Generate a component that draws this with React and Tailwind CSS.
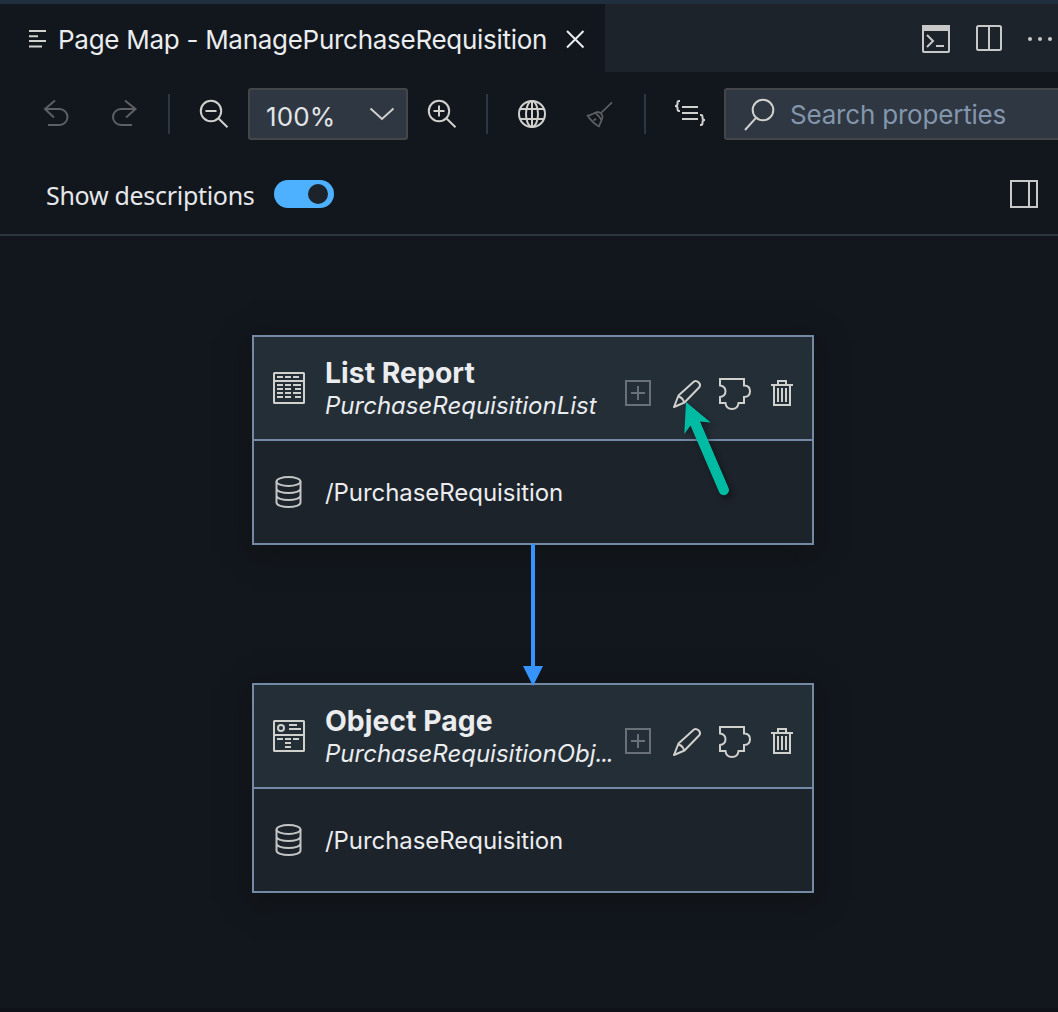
import React from "react";

function Icon({ box, className = "", children, sw = 2 }) {
  const [, , w, h] = box.split(" ");
  return (
    <svg
      width={w}
      height={h}
      viewBox={box}
      className={`shrink-0 ${className}`}
      fill="none"
      stroke="currentColor"
      strokeWidth={sw}
    >
      {children}
    </svg>
  );
}

function Separator({ className }) {
  return <div className={`h-10 w-0.5 shrink-0 bg-[#2d3744] ${className}`} />;
}

function TabBar() {
  return (
    <div className="flex h-[72px] border-t-4 border-[#1f2f40] bg-[#1d232a]">
      <div className="flex h-full w-[605px] shrink-0 items-center bg-[#12171e] pt-0.5 text-[#eaecee]">
        <Icon box="28 28 20 22" className="ml-7 text-[#d0d0cd]">
          <path d="M29 31h17M29 36.200h9M29 41h17M29 46.400h13" />
        </Icon>
        <span className="ml-2.5 w-[489px] whitespace-nowrap pt-0.5 text-[26px] leading-8 tracking-[-0.28px]">
          Page Map - ManagePurchaseRequisition
        </span>
        <Icon box="565 29 20 20" className="ml-[18px]">
          <path d="M567 31l16.500 16.500M583.500 31L567 47.500" />
        </Icon>
      </div>
      <div className="flex flex-1 items-center justify-end pt-0.5 text-[#c8c8c8]">
        <Icon box="921 22 30 34">
          <rect x="923" y="26" width="26" height="26" rx="1" />
          <path d="M922 28h28" strokeWidth="6" />
          <path d="M927 35l6 6-6 6M936 46h8" />
        </Icon>
        <Icon box="975 22 28 34" className="ml-6">
          <rect x="977" y="26" width="24" height="24" rx="1.500" />
          <path d="M989 26v24" />
        </Icon>
        <Icon box="1027 22 31 34" className="ml-6">
          <g fill="currentColor" stroke="none">
            <circle cx="1030" cy="39" r="2" />
            <circle cx="1040" cy="39" r="2" />
            <circle cx="1050" cy="39" r="2" />
          </g>
        </Icon>
      </div>
    </div>
  );
}

function Toolbar() {
  return (
    <div className="flex h-[84px] items-center overflow-hidden text-[#d0d0cd]">
      <Icon box="42 98 28 32" className="ml-[42px] text-[#5d6063]">
        <path d="M55 100.500L45 109l9 8.500M45 109h14.500a8 8 0 0 1 0 16H48" />
      </Icon>
      <Icon box="110 98 28 32" className="ml-10 text-[#5d6063]">
        <path d="M125 100.500l10.500 8.500-9.500 8.500M135.500 109H121a8 8 0 0 0 0 16h11" />
      </Icon>
      <Separator className="ml-[30px]" />
      <Icon box="198 98 32 32" className="ml-7">
        <circle cx="211" cy="111" r="10.200" />
        <path d="M205.500 111h11M218.300 118.300l9.200 9" />
      </Icon>
      <div className="ml-[18px] flex h-[52px] w-40 shrink-0 items-center rounded-[3px] border-2 border-[#45464a] bg-[#2f3743]">
        <span className="ml-4 w-[100px] pt-1.5 text-[26px] leading-8 tracking-[0.1px] text-[#e2e4e7]">
          100%
        </span>
        <Icon box="368 106 28 16" className="ml-0.5">
          <path d="M370.500 108.500L382 119l11.500-10.500" />
        </Icon>
      </div>
      <Icon box="426 98 32 32" className="ml-[18px]">
        <circle cx="439" cy="111" r="10.200" />
        <path d="M433.500 111h11M439 105.500v11M446.300 118.300l9.200 9" />
      </Icon>
      <Separator className="ml-7" />
      <Icon box="516 98 32 32" className="ml-7">
        <circle cx="532" cy="114" r="13" />
        <ellipse cx="532" cy="114" rx="6" ry="13" />
        <path d="M532 101v26M520 109h24M520 119h24" />
      </Icon>
      <Icon box="584 98 32 32" className="ml-9 text-[#5d6063]" sw={1.7}>
        <path
          d="M612 102.300L601 113M587.500 115.500c3.500 0 6-2.500 9-3.300 3.500-.7 6.300 2 6 5-.4 3.200-2.200 5-3.500 9.300-4.500-2.500-8.500-6.500-11.500-11zM594.500 112.800c2.500 1.200 5 3.700 6.800 7.200M593.500 120.500l2.500-1.700"
          strokeLinejoin="round"
        />
      </Icon>
      <Separator className="ml-7" />
      <Icon box="672 98 36 32" className="ml-[26px]">
        <path d="M680 101h-1q-1.500 0-1.500 2v1q0 2-2.500 2 2.500 0 2.500 2v1q0 2 1.500 2h1M682 107h16M682 113h16M682 119h16M700 115h1q1.500 0 1.500 2v1q0 2 2.500 2-2.500 0-2.500 2v1q0 2-1.500 2h-1" />
      </Icon>
      <div className="ml-4 flex h-[52px] w-[350px] shrink-0 items-center rounded-[3px] border-2 border-[#45464a] bg-[#2f3743]">
        <Icon box="743 97 34 36" className="ml-[17px]">
          <circle cx="763" cy="111" r="10.300" />
          <path d="M756 118.800L745 131" />
        </Icon>
        <span className="ml-[13px] whitespace-nowrap pt-0.5 text-[26px] leading-8 tracking-[-0.2px] text-[#8396ab]">
          Search properties
        </span>
      </div>
    </div>
  );
}

function DescriptionsBar() {
  return (
    <div className="flex h-20 items-center border-b-2 border-[#2d3640]">
      <span className="ml-[46px] w-[228px] whitespace-nowrap font-['Noto_Sans',sans-serif] text-[25px] leading-8 tracking-[-0.3px] text-[#e6e7e9]">
        Show descriptions
      </span>
      <button
        role="switch"
        aria-checked="true"
        aria-label="Show descriptions"
        className="-mt-0.5 flex h-7 w-[60px] items-center justify-end rounded-full bg-[#4db1ff] pr-1.5"
      >
        <span className="size-5 rounded-full bg-[#1d232a]" />
      </button>
      <Icon box="1010 180 28 28" className="-mt-0.5 mr-5 ml-auto text-[#c8c8c8]">
        <path d="M1011 181h26v26h-26zM1029 181v26" />
      </Icon>
    </div>
  );
}

function ListReportIcon() {
  return (
    <Icon box="273 372 32 32" className="text-[#d0d0cd]">
      <rect x="274" y="373" width="30" height="30" rx="0.500" />
      <path d="M274 381h30M277 377h6M285 377h6M293 377h6M277 385h6M285 385h6M293 385h8M277 389h6M285 389h6M295 389h6M277 393h6M285 393h6M293 393h8M277 397h6M285 397h6M295 397h6" />
    </Icon>
  );
}

function ObjectPageIcon() {
  return (
    <Icon box="273 720 32 32" className="text-[#d0d0cd]">
      <rect x="274" y="721" width="30" height="30" rx="0.500" />
      <circle cx="281" cy="728" r="3" />
      <path d="M274 735h30M289 725h8M289 729h12M277 739h6M285 739h6M293 739h6M285 743h6M285 747h6" />
    </Icon>
  );
}

function PageNode({ icon, title, name, entity, className }) {
  return (
    <div
      className={`absolute left-[252px] h-[210px] w-[562px] border-2 border-[#748aa4] bg-[#1d232a] shadow-[0_6px_26px_2px_rgba(16,18,16,0.75)] ${className}`}
    >
      <div className="flex h-[104px] border-b-2 border-[#748aa4] bg-[#242e37] text-[#d0d0cd]">
        <div className="ml-[19px] flex items-center">{icon}</div>
        <div className="ml-5 w-[294px] pt-[19px] text-[#eaecee]">
          <div className="h-[34px] whitespace-nowrap text-[28.300px] leading-[34px] font-bold tracking-[0.05px]">
            {title}
          </div>
          <div className="h-8 whitespace-nowrap text-[24px] leading-8 italic">{name}</div>
        </div>
        <div className="mt-[37px] flex h-10 items-center">
          <Icon box="622 376 32 36" className="ml-[3px] text-[#697078]">
            <path d="M626 381h24v24h-24zM631 393h14M638 386v14" />
          </Icon>
          <Icon box="670 376 34 36" className="ml-4">
            <path
              d="M674 407l4.500-11.500 15.500-14q2-1.500 4.500.8t1 4.700l-15 15.500zM678.500 396.500q4 1 5.500 5.500"
              strokeLinejoin="round"
            />
          </Icon>
          <Icon box="717 376 36 36" className="ml-[13px]">
            <path d="M720 379h24v6.500q6 0 6 5.700t-6 5.800v6h-5.500q-.5 6-6.500 6t-6.500-6H720v-6q5.500-1 5.500-5.800T720 385.500z" />
          </Icon>
          <Icon box="769 376 26 36" className="ml-4">
            <path d="M771 385h22M778 385v-4h8v4M774 385v20h16v-20M778 388v14M782 388v14M786 388v14" />
          </Icon>
        </div>
      </div>
      <div className="flex h-[102px] items-center">
        <Icon box="275 475 28 34" className="ml-[21px] text-[#c3c5c5]">
          <ellipse cx="288.500" cy="481.500" rx="12" ry="4.500" />
          <path d="M276.500 481.500v21c0 6 24 6 24 0v-21M276.500 488.500c0 6 24 6 24 0M276.500 495.500c0 6 24 6 24 0" />
        </Icon>
        <span className="ml-[22px] whitespace-nowrap pt-0.5 text-[24px] leading-8 tracking-[-0.06px] text-[#eaecee]">
          {entity}
        </span>
      </div>
    </div>
  );
}

function PageMapCanvas() {
  return (
    <div className="relative flex-1 overflow-hidden border-b-4 border-[#0f1219]">
      <PageNode
        className="top-[99px]"
        icon={<ListReportIcon />}
        title="List Report"
        name="PurchaseRequisitionList"
        entity="/PurchaseRequisition"
      />
      <PageNode
        className="top-[447px]"
        icon={<ObjectPageIcon />}
        title="Object Page"
        name={
          <>
            PurchaseRequisitionObj<span className="tracking-[-1.3px]">...</span>
          </>
        }
        entity="/PurchaseRequisition"
      />
      <svg
        className="absolute top-[307px] left-[522px]"
        width="22"
        height="144"
        viewBox="522 543 22 144"
        fill="#3794ff"
      >
        <path d="M531 544h4v122h8l-10 20-10-20h8z" />
      </svg>
      <svg
        className="absolute top-[154px] left-[670px] drop-shadow-[3px_4px_3px_rgba(0,0,0,0.4)]"
        width="80"
        height="115"
        viewBox="670 390 80 115"
        fill="#00bba4"
      >
        <path d="M686 402l24.700 20.600-10.700-1.200 28.500 66.500a5 5 0 0 1-9.300 4.300L690.500 425.500 684.300 434z" />
      </svg>
    </div>
  );
}

export default function App() {
  return (
    <div className="flex h-[1012px] w-[1058px] flex-col overflow-hidden bg-[#12171e] font-['Inter',sans-serif]">
      <TabBar />
      <Toolbar />
      <DescriptionsBar />
      <PageMapCanvas />
    </div>
  );
}
